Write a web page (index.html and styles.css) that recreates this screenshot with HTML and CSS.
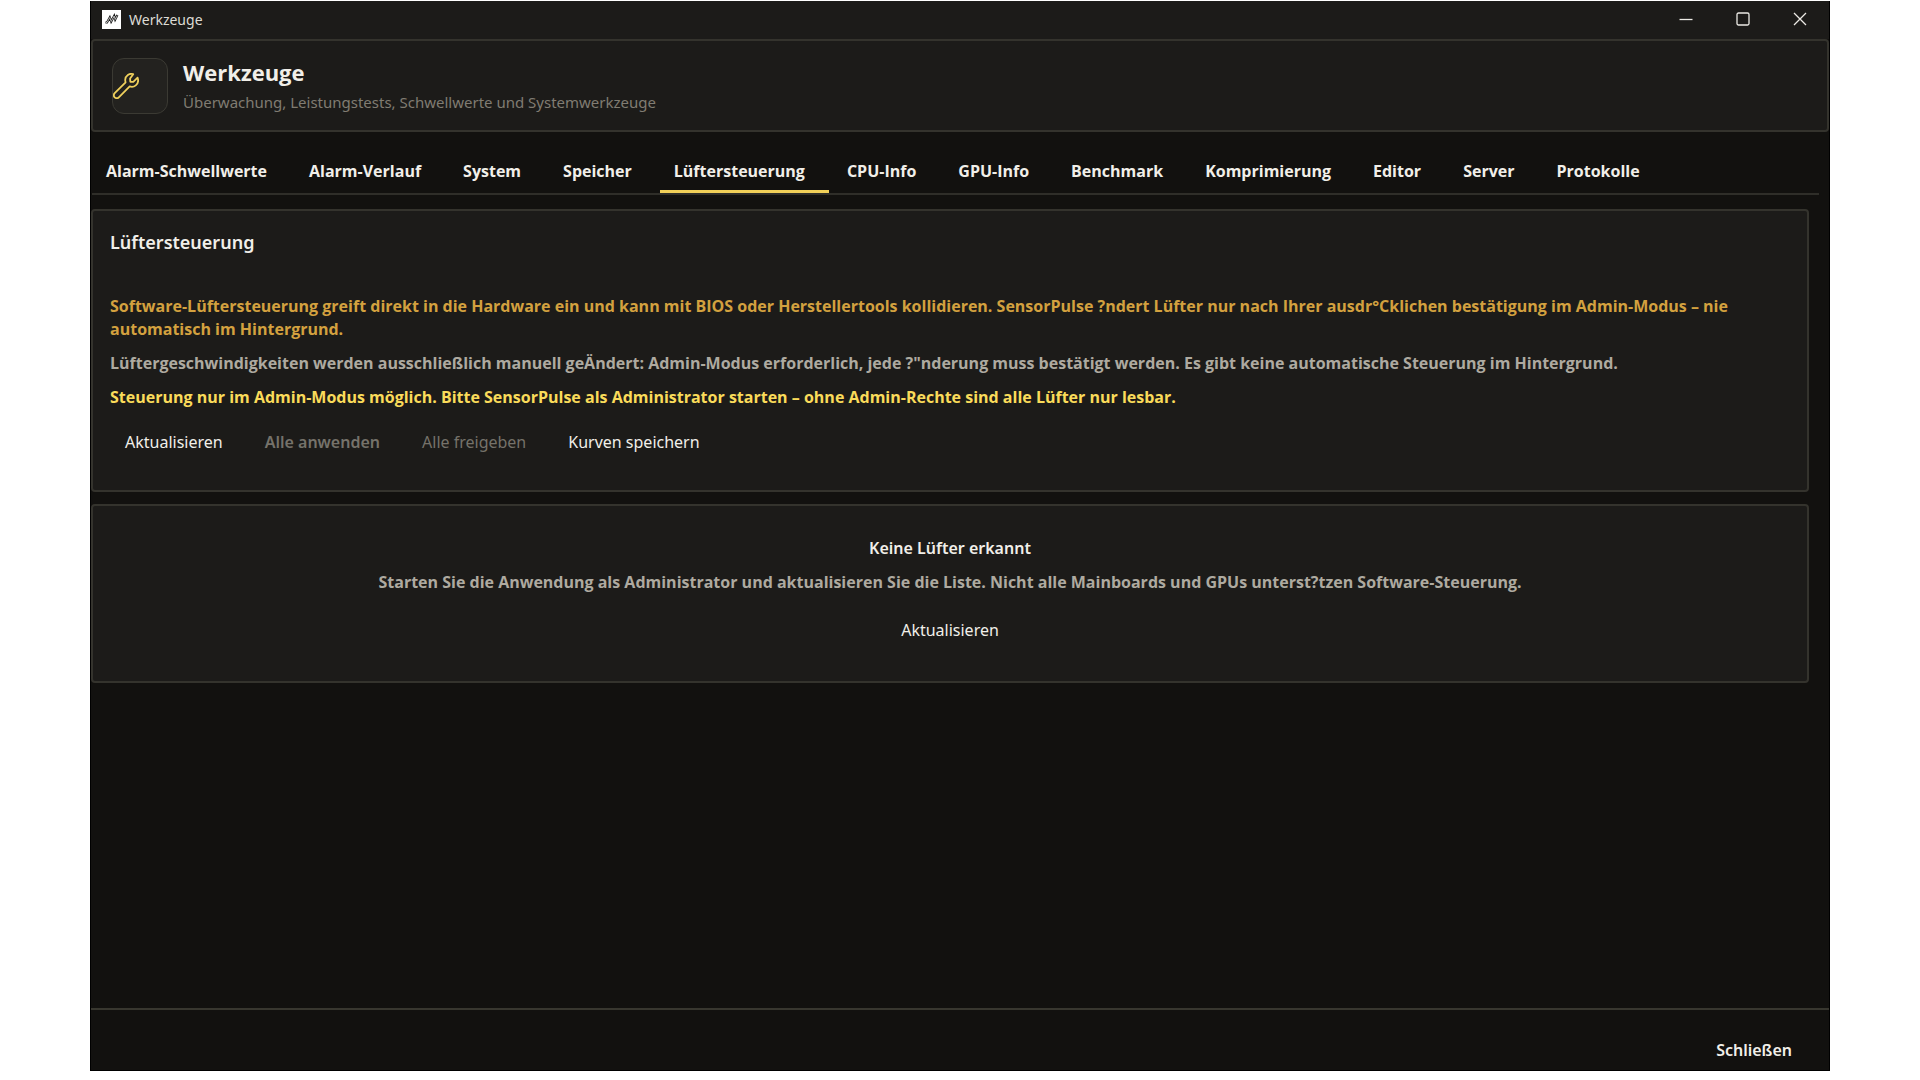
FILE: index.html
```
<!DOCTYPE html>
<html lang="de">
    <head>
        <meta charset="UTF-8" />
        <meta name="viewport" content="width=device-width, initial-scale=1.0" />
        <title>Werkzeuge</title>
        <link rel="stylesheet" href="styles.css">
    </head>
    <body>
        <div class="window">
            <div class="titlebar">
                <svg class="app-icon" viewBox="0 0 19 19" aria-hidden="true">
                    <rect width="19" height="19" fill="#fff" />
                    <path d="M3.500 12.500h1.500l2.800-5 1.400 4 3-5.500 1 3.500 2.200-4.500" fill="none" stroke="#161616" stroke-width="2.200" />
                    <path d="M4 12.500h1l2.800-5 1.400 4 3-5.500 1 3.500 2-4" fill="none" stroke="#ccc" stroke-width="0.900" />
                </svg>
                <span class="titlebar-text">Werkzeuge</span>
                <div class="window-controls">
                    <button type="button" aria-label="Minimieren">
                        <svg viewBox="0 0 14 14"><path d="M0.500 7.500h13" /></svg>
                    </button>
                    <button type="button" aria-label="Maximieren">
                        <svg viewBox="0 0 14 14"><rect x="1" y="1" width="12" height="12" rx="1.500" /></svg>
                    </button>
                    <button type="button" aria-label="Fenster schließen">
                        <svg viewBox="0 0 14 14"><path d="M1 1l12 12M13 1L1 13" /></svg>
                    </button>
                </div>
            </div>

            <header class="header">
                <div class="header-icon">
                    <svg viewBox="0 0 26 26" aria-hidden="true">
                        <path d="M20.200 1.200C16.500-.2 12.300 2.600 12.200 6.800c0 1 .1 1.700.4 2.500L1.700 20.200c-1.200 1.200-1.200 3 0 4.100s3 1.200 4.100 0L16.700 13.400c4.500 1.500 8.900-2 8.400-6.600l-.5-2.100-4.300 4.200-3-.1-.2-3.200z" />
                    </svg>
                </div>
                <div>
                    <h1>Werkzeuge</h1>
                    <p>Überwachung, Leistungstests, Schwellwerte und Systemwerkzeuge</p>
                </div>
            </header>

            <nav class="tabs" role="tablist">
                <button type="button" role="tab">Alarm-Schwellwerte</button>
                <button type="button" role="tab">Alarm-Verlauf</button>
                <button type="button" role="tab">System</button>
                <button type="button" role="tab">Speicher</button>
                <button type="button" role="tab" class="active" aria-selected="true">Lüftersteuerung</button>
                <button type="button" role="tab">CPU-Info</button>
                <button type="button" role="tab">GPU-Info</button>
                <button type="button" role="tab">Benchmark</button>
                <button type="button" role="tab">Komprimierung</button>
                <button type="button" role="tab">Editor</button>
                <button type="button" role="tab">Server</button>
                <button type="button" role="tab">Protokolle</button>
            </nav>

            <main class="content">
                <section class="card">
                    <h2>Lüftersteuerung</h2>
                    <p class="warning">Software-Lüftersteuerung greift direkt in die Hardware ein und kann mit BIOS oder Herstellertools kollidieren. SensorPulse ?ndert Lüfter nur nach Ihrer ausdr°Cklichen bestätigung im Admin-Modus – nie automatisch im Hintergrund.</p>
                    <p class="muted">Lüftergeschwindigkeiten werden ausschließlich manuell geÄndert: Admin-Modus erforderlich, jede ?"nderung muss bestätigt werden. Es gibt keine automatische Steuerung im Hintergrund.</p>
                    <p class="notice">Steuerung nur im Admin-Modus möglich. Bitte SensorPulse als Administrator starten – ohne Admin-Rechte sind alle Lüfter nur lesbar.</p>
                    <div class="actions">
                        <button type="button" class="btn">Aktualisieren</button>
                        <button type="button" class="btn btn-strong" disabled>Alle anwenden</button>
                        <button type="button" class="btn" disabled>Alle freigeben</button>
                        <button type="button" class="btn">Kurven speichern</button>
                    </div>
                </section>

                <section class="card empty">
                    <h3>Keine Lüfter erkannt</h3>
                    <p class="muted">Starten Sie die Anwendung als Administrator und aktualisieren Sie die Liste. Nicht alle Mainboards und GPUs unterst?tzen Software-Steuerung.</p>
                    <button type="button" class="btn">Aktualisieren</button>
                </section>
            </main>

            <footer class="footer">
                <button type="button" class="btn btn-strong">Schließen</button>
            </footer>
        </div>
    </body>
</html>
```
FILE: styles.css
```
* {
    box-sizing: border-box;
}
body {
    margin: 0;
    padding: 1px 90px 9px;
    min-height: 100vh;
    display: flex;
    background: #fff;
    color: #f1efe9;
    font-family: "Noto Sans", "Segoe UI", sans-serif;
    font-size: 16px;
    line-height: 23px;
}
h1, h2, h3, p {
    margin: 0;
}
button {
    border: 0;
    padding: 0;
    background: none;
    color: inherit;
    font: inherit;
}
.window {
    flex: 1;
    min-width: 0;
    display: flex;
    flex-direction: column;
    background: #12110f;
    border: 1px solid #000;
    border-top: 0;
}
.titlebar {
    display: flex;
    align-items: center;
    height: 38px;
    padding: 0 1px 2px 11px;
    background: #1c1b19;
}
.app-icon {
    width: 19px;
    height: 19px;
    margin-right: 8px;
}
.titlebar-text {
    font-size: 14px;
    color: #dddbd5;
}
.window-controls {
    display: flex;
    margin-left: auto;
}
.window-controls button {
    width: 57px;
    height: 36px;
    display: flex;
    align-items: center;
    justify-content: center;
}
.window-controls svg {
    width: 14px;
    height: 14px;
    fill: none;
    stroke: #eceae5;
    stroke-width: 1.3;
}
.header {
    display: flex;
    align-items: center;
    gap: 15px;
    height: 93px;
    padding: 0 19px;
    background: #1c1b19;
    border: 2px solid #34332d;
    border-radius: 4px;
}
.header-icon {
    display: flex;
    align-items: center;
    width: 56px;
    height: 56px;
    background: #23221f;
    border: 1px solid #3b3a33;
    border-radius: 12px;
}
.header-icon svg {
    width: 26px;
    height: 26px;
    fill: none;
    stroke: #efd05c;
    stroke-width: 1.8;
    stroke-linejoin: round;
}
.header h1 {
    font-family: "Open Sans", "Segoe UI", sans-serif;
    font-size: 22px;
    line-height: 32px;
    font-weight: 700;
}
.header p {
    font-size: 15px;
    line-height: 28px;
    color: #807c72;
}
.tabs {
    display: flex;
    gap: 4px;
    margin: 13px 10px 0 1px;
    border-bottom: 2px solid #2f2e29;
}
.tabs button {
    height: 48px;
    padding: 7px 24px 0 14px;
    border-bottom: 3px solid transparent;
    font-family: "Open Sans", "Segoe UI", sans-serif;
    font-weight: 700;
    white-space: nowrap;
}
.tabs .active {
    border-bottom-color: #f0cf58;
}
.content {
    flex: 1;
    display: flex;
    flex-direction: column;
    gap: 12px;
    padding: 14px 20px 0 0;
}
.card {
    padding: 20px 17px 26px;
    background: #1c1b19;
    border: 2px solid #34332d;
    border-radius: 4px;
}
.card h2 {
    margin-bottom: 41px;
    font-size: 18px;
    font-weight: 600;
}
.card h3 {
    font-size: 16px;
    font-weight: 600;
}
.card p {
    margin-bottom: 11px;
    font-family: "Open Sans", "Segoe UI", sans-serif;
    font-weight: 700;
}
.warning {
    color: #d3a13f;
}
.muted {
    color: #aeaaa0;
}
.notice {
    color: #fadb5a;
}
.actions {
    display: flex;
    gap: 12px;
}
.btn {
    height: 44px;
    padding: 0 15px;
    font-weight: 400;
}
.btn-strong {
    font-weight: 600;
}
.btn:disabled {
    color: #75726a;
}
.empty {
    text-align: center;
}
.empty h3 {
    margin: 11px 0;
}
.empty .btn {
    margin: 3px 0;
}
.footer {
    display: flex;
    justify-content: flex-end;
    padding: 20px 22px 0;
    border-top: 2px solid #38372f;
}
.footer .btn {
    height: 40px;
}
```
